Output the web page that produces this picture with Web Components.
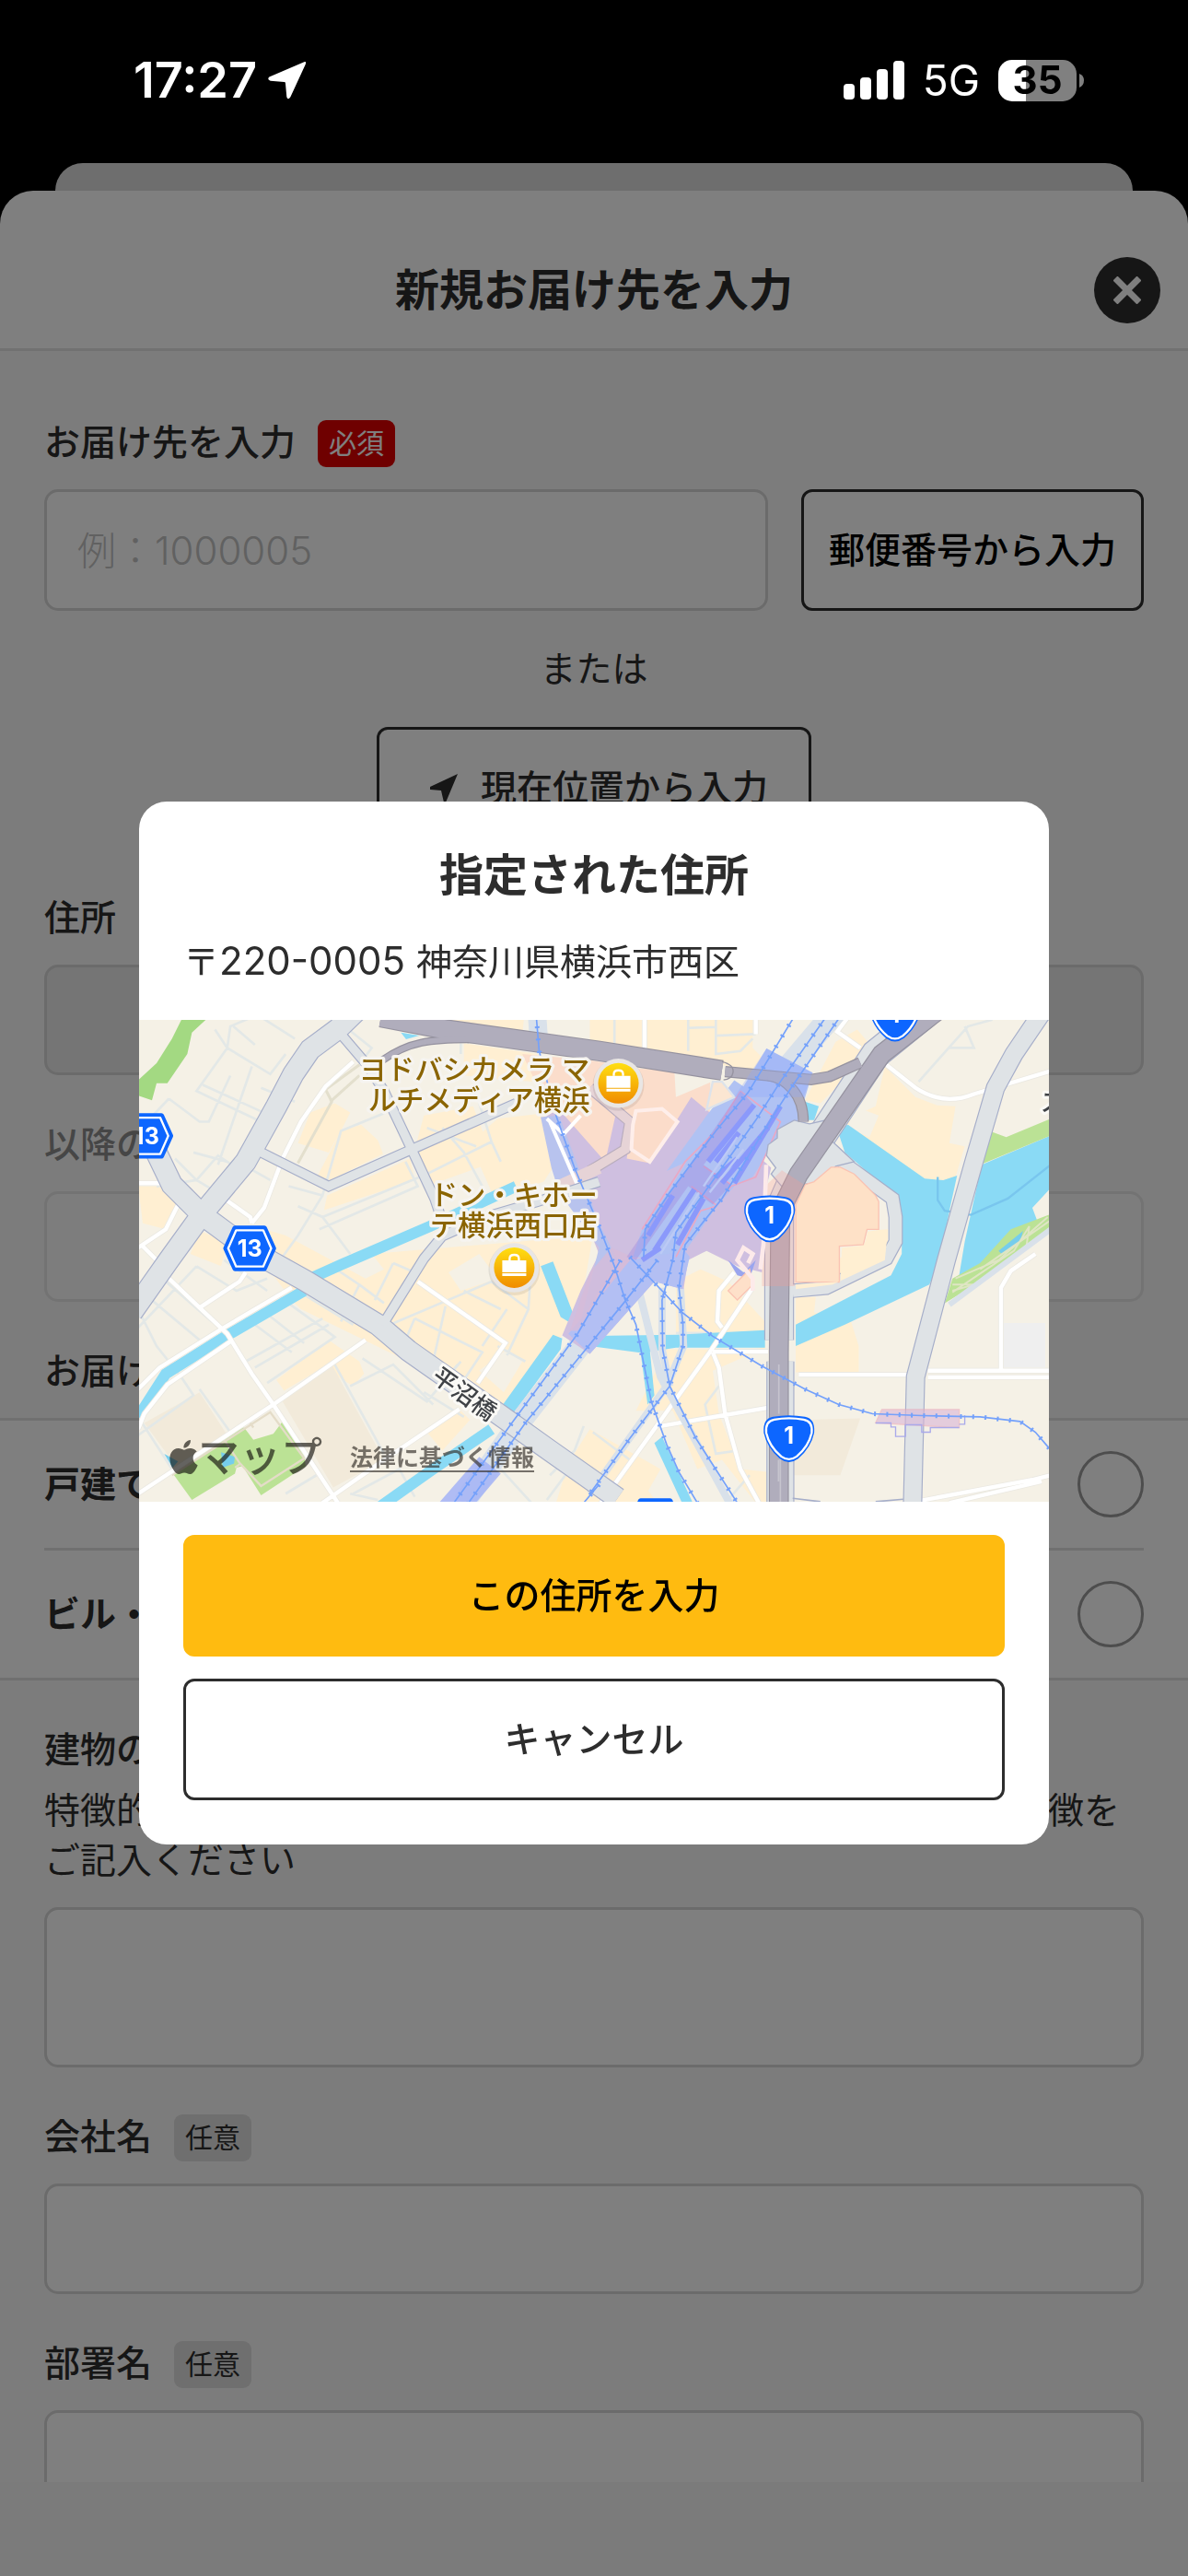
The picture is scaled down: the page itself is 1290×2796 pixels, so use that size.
<!DOCTYPE html>
<html lang="ja">
<head>
<meta charset="utf-8">
<meta name="viewport" content="width=device-width, initial-scale=1">
<title>新規お届け先を入力</title>
<style>
	body {
		margin: 0;
		background-color: #000;
		color: #2d2d2d;
		font-family: Inter, "Noto Sans CJK JP", sans-serif;
		font-size: 39px;
		line-height: 54px;
	}
</style>
</head>
<body>
<app-screen>
	<status-bar slot="status" time="17:27" network="5G" battery="35"></status-bar>
	<sheet-header slot="header">新規お届け先を入力</sheet-header>
	<form-field label="お届け先を入力" badge="必須" placeholder="例：1000005" size="large">
		<outline-button slot="after" tone="black">郵便番号から入力</outline-button>
	</form-field>
	<or-locate></or-locate>
	<form-field label="住所" state="readonly"></form-field>
	<form-field label="以降の住所" state="disabled"></form-field>
	<choice-list></choice-list>
	<form-field label="建物の特徴" kind="textarea">特徴的な外観や近くの目印など、お届けの際にわかりやすい特徴をご記入ください</form-field>
	<form-field label="会社名" badge="任意"></form-field>
	<form-field label="部署名" badge="任意"></form-field>
	<address-dialog slot="dialog" heading="指定された住所" postcode="220-0005" address="神奈川県横浜市西区">
		<area-map></area-map>
	</address-dialog>
</app-screen>

<script>
const ARROW = 'M29 1 L1 13 Q-1 15 2 16 L13 17 Q14 17 14 18 L15 29 Q16 32 18 29 L30 3 Q31 0 29 1 Z';

class AppScreen extends HTMLElement {
	constructor() {
		super();
		this.attachShadow({mode: 'open'}).innerHTML = `
	<style>
	:host {
		display: flex;
		flex-direction: column;
		height: 100vh;
		overflow: hidden;
	}

	.behind {
		flex: none;
		height: 30px;
		margin: 0 60px;
		border-radius: 30px 30px 0 0;
		background-color: #dcdcdc;
	}

	.sheet {
		flex: 1;
		min-height: 0;
		display: flex;
		flex-direction: column;
		border-radius: 36px 36px 0 0;
		overflow: hidden;
		background-color: #fff;
	}

	main {
		flex: 1;
		min-height: 0;
		overflow: hidden;
		display: flex;
		flex-direction: column;
		gap: 51px;
		padding-top: 75px;
		box-sizing: border-box;
		background-color: #f8f8f8;
	}

	footer {
		flex: none;
		height: 102px;
		background-color: #f6f6f6;
	}

	.scrim {
		position: fixed;
		inset: 0;
		display: flex;
		align-items: center;
		padding: 75px 151px 0;
		background-color: rgba(0, 0, 0, .5);
	}
	</style>
	<slot name="status"></slot>
	<div class="behind"></div>
	<div class="sheet">
		<slot name="header"></slot>
		<main><slot></slot></main>
		<footer></footer>
	</div>
	<div class="scrim"><slot name="dialog"></slot></div>
	`;
	}
}

class StatusBar extends HTMLElement {
	connectedCallback() {
		this.attachShadow({mode: 'open'}).innerHTML = `
	<style>
	:host {
		flex: none;
		display: flex;
		justify-content: space-between;
		align-items: center;
		height: 177px;
		padding: 0 113px 3px 145px;
		box-sizing: border-box;
		color: #fff;
		position: relative;
		z-index: 1;
	}

	div {
		display: flex;
		align-items: center;
	}

	.time {
		font-size: 54px;
		font-weight: 600;
		gap: 12px;
	}

	.net {
		font-size: 46px;
		gap: 20px;
	}

	.battery {
		width: 85px;
		height: 45px;
		justify-content: center;
		border-radius: 15px;
		font-size: 42px;
		font-weight: 700;
		color: #000;
		background: linear-gradient(90deg, #fff 30px, #808080 30px);
	}

	.cell {
		gap: 3px;
	}

	svg {
		display: block;
	}
	</style>
	<div class="time">${this.getAttribute('time')}<svg width="42" height="42" viewBox="0 0 31 31" fill="#fff"><path d="${ARROW}"/></svg></div>
	<div class="net">
		<svg width="66" height="42" fill="#fff">
			<rect x="0" y="25" width="12" height="17" rx="4"/>
			<rect x="18" y="18" width="12" height="24" rx="4"/>
			<rect x="36" y="9" width="12" height="33" rx="4"/>
			<rect x="54" y="0" width="12" height="42" rx="4"/>
		</svg>
		<span>${this.getAttribute('network')}</span>
		<div class="cell">
			<div class="battery">${this.getAttribute('battery')}</div>
			<svg width="5" height="15" fill="#808080"><path d="M0 0 Q5 2 5 7 Q5 13 0 15 Z"/></svg>
		</div>
	</div>
	`;
	}
}

class SheetHeader extends HTMLElement {
	constructor() {
		super();
		this.attachShadow({mode: 'open'}).innerHTML = `
	<style>
	:host {
		flex: none;
		display: grid;
		grid-template-columns: 72px 1fr 72px;
		align-items: center;
		height: 174px;
		padding: 45px 30px 0;
		box-sizing: border-box;
		border-bottom: 3px solid #e2e2e2;
	}

	h1 {
		grid-column: 2;
		margin: 0;
		text-align: center;
		font-size: 48px;
		font-weight: 700;
	}

	button {
		width: 72px;
		height: 72px;
		padding: 0;
		border: 0;
		border-radius: 50%;
		background-color: #2d2d2d;
	}

	svg {
		display: block;
		margin: auto;
	}
	</style>
	<h1><slot></slot></h1>
	<button aria-label="閉じる"><svg width="30" height="30" stroke="#fff" stroke-width="7"><path d="M2 2 L28 28 M28 2 L2 28"/></svg></button>
	`;
	}
}

class FormField extends HTMLElement {
	connectedCallback() {
		const badge = this.getAttribute('badge');
		const area = this.getAttribute('kind') === 'textarea';
		const off = this.hasAttribute('state') ? 'disabled' : '';
		this.attachShadow({mode: 'open'}).innerHTML = `
	<style>
	:host {
		display: block;
		padding: 0 48px;
	}

	.head {
		display: flex;
		align-items: flex-start;
		gap: 24px;
		height: 51px;
		margin-bottom: 24px;
	}

	label {
		font-weight: 500;
		line-height: 48px;
	}

	.badge {
		padding: 0 12px;
		border-radius: 9px;
		font-size: 30px;
		line-height: 51px;
		background-color: #dedede;
	}

	.badge.must {
		color: #fff;
		background-color: #df0000;
	}

	p {
		margin: -12px 0 24px;
	}

	.row {
		display: flex;
		gap: 36px;
	}

	input, textarea {
		flex: 1;
		min-width: 0;
		height: 120px;
		padding: 0 33px;
		box-sizing: border-box;
		border: 3px solid #d6d6d6;
		border-radius: 15px;
		background-color: #fff;
		color: inherit;
		font: inherit;
		font-size: 42px;
		resize: none;
	}

	textarea {
		height: 174px;
	}

	::placeholder {
		color: #c2c2c2;
		font-weight: 300;
		opacity: 1;
	}

	:host([size=large]) input {
		height: 132px;
	}

	:host([state=readonly]) input {
		background-color: #eaeaea;
	}

	:host([state=disabled]) label {
		color: #8c8c8c;
	}

	:host([state=disabled]) input {
		border-color: #e6e6e6;
		background-color: #fbfbfb;
	}
	</style>
	<div class="head">
		<label for="field">${this.getAttribute('label')}</label>
		${badge ? `<span class="badge ${badge === '必須' ? 'must' : ''}">${badge}</span>` : ''}
	</div>
	${area ? '<p><slot></slot></p>' : ''}
	<div class="row">
		${area ? '<textarea id="field"></textarea>' : `<input id="field" type="text" placeholder="${this.getAttribute('placeholder') || ''}" ${off}>`}
		<slot name="after"></slot>
	</div>
	`;
	}
}

class OutlineButton extends HTMLElement {
	constructor() {
		super();
		this.attachShadow({mode: 'open'}).innerHTML = `
	<style>
	:host {
		display: block;
	}

	button {
		display: flex;
		align-items: center;
		justify-content: center;
		gap: 24px;
		width: 100%;
		height: 132px;
		padding: 0 27px;
		box-sizing: border-box;
		border: 3px solid #2d2d2d;
		border-radius: 12px;
		background-color: #fff;
		color: #2d2d2d;
		font: inherit;
		font-weight: 500;
		white-space: nowrap;
	}

	:host([tone=black]) button {
		color: #000;
	}

	:host([tone=yellow]) button {
		border-color: #ffbb10;
		background-color: #ffbb10;
		color: #000;
	}

	:host([wide]) button {
		padding: 0 44px 0 55px;
	}
	</style>
	<button type="button"><slot name="icon"></slot><span><slot></slot></span></button>
	`;
	}
}

class OrLocate extends HTMLElement {
	constructor() {
		super();
		this.attachShadow({mode: 'open'}).innerHTML = `
	<style>
	:host {
		display: flex;
		flex-direction: column;
		align-items: center;
		gap: 36px;
		margin-top: -15px;
	}

	svg {
		display: block;
	}
	</style>
	<span>または</span>
	<outline-button wide>
		<svg slot="icon" width="31" height="31" viewBox="0 0 31 31" fill="#2d2d2d"><path d="M30 0 L0 14 L0 17 L12 18 L15 31 L17 31 Z"/></svg>
		現在位置から入力
	</outline-button>
	`;
	}
}

class ChoiceList extends HTMLElement {
	constructor() {
		super();
		this.attachShadow({mode: 'open'}).innerHTML = `
	<style>
	:host {
		display: block;
	}

	h2 {
		height: 51px;
		margin: 0 48px 24px;
		font-size: 39px;
		line-height: 48px;
		font-weight: 500;
	}

	.rows {
		padding: 0 48px;
		border: solid #e0e0e0;
		border-width: 3px 0;
		background-color: #fff;
	}

	label {
		display: flex;
		align-items: center;
		justify-content: space-between;
		height: 138px;
		font-weight: 700;
	}

	label + label {
		border-top: 3px solid #e0e0e0;
	}

	input {
		appearance: none;
		width: 72px;
		height: 72px;
		margin: 0;
		border: 3px solid #9a9a9a;
		border-radius: 50%;
	}
	</style>
	<h2>お届け先の建物</h2>
	<div class="rows">
		<label>戸建て<input type="radio" name="building"></label>
		<label>ビル・マンション<input type="radio" name="building"></label>
	</div>
	`;
	}
}

class AddressDialog extends HTMLElement {
	connectedCallback() {
		this.attachShadow({mode: 'open'}).innerHTML = `
	<style>
	:host {
		flex: 1;
		min-width: 0;
		border-radius: 30px;
		overflow: hidden;
		background-color: #fff;
	}

	header {
		display: flex;
		flex-direction: column;
		gap: 30px;
		padding: 44px 48px 36px;
	}

	h2 {
		margin: 0;
		text-align: center;
		font-size: 48px;
		line-height: 72px;
	}

	p {
		margin: 0;
	}

	.postcode {
		font-size: 42px;
	}

	.actions {
		display: flex;
		flex-direction: column;
		gap: 24px;
		padding: 36px 48px 48px;
	}
	</style>
	<header>
		<h2>${this.getAttribute('heading')}</h2>
		<p>〒<span class="postcode">${this.getAttribute('postcode')} </span>${this.getAttribute('address')}</p>
	</header>
	<slot></slot>
	<div class="actions">
		<outline-button tone="yellow">この住所を入力</outline-button>
		<outline-button>キャンセル</outline-button>
	</div>
	`;
	}
}

// [path, width], drawn first as a casing and then as a fill
const majorRoads = [
	['M720 -20 L650 48 L560 115 L505 195 L450 300 L350 480 L207 652 L100 800 L-20 970', 66],
	['M40 410 L110 555 L207 652 L360 765 L540 865 L780 1010 L880 1095 L1200 1320 L1340 1420 L1560 1575', 66],
	['M660 65 L745 165 L800 250 L890 440 L965 600 L985 660', 28],
	['M395 447 L620 560 L890 440 L1230 290', 28],
	['M1500 545 L1300 610 L1130 660 L990 722 L930 795 L795 1012', 28],
	['M2945 -10 L2850 130 L2790 240 L2720 480 L2630 800 L2530 1180 L2520 1600', 56],
	['M2290 480 L2455 600 L2465 660 L2465 740 L2435 795 L2240 890 L2130 900', 40],
	['M2560 0 L2400 130 L2130 540 L2086 640 L2086 1060', 90],
	['M2090 1130 L2090 1600', 84]
];

const highways = [
	['M790 10 L1000 50 L1500 120 L1900 183', 60],
	['M1910 187 L2190 213 L2250 203 L2350 158', 30],
	['M2050 200 C2110 210 2165 260 2165 350', 28],
	['M1100 82 C950 80 880 90 795 150', 18],
	['M2600 -10 L2420 130 L2150 520 L2090 640 L2085 1100 L2085 1600', 58]
];

const whiteRoads = `
	M0 1220 L70 1150 L270 1025 L500 890
	M0 1350 L20 1300 L95 1205 L300 1065
	M100 860 L200 955 L290 1040 L370 1170 L440 1270 L650 1590
	M200 955 L330 870 L350 840
	M0 1560 L440 1270 L740 1060
	M600 1590 L830 1430 L1045 1285
	M910 870 L1195 1070 L1105 1200
	M700 155 L610 235 L530 350 L470 470 L410 630 L370 680
	M0 550 L80 550 M0 760 L90 700 L130 620 M10 750 L70 810
	M280 600 L365 660 L370 680
	M1940 840 L1890 900 L1885 1000 L1900 1020
	M2000 890 L1900 1040 L1860 1100 L1550 1530 L1470 1640
	M1870 1098 L2050 1098
	M1870 1100 L1890 1150 L1910 1300 L1960 1480 L2020 1590
	M1700 1340 L2050 1280
	M2150 1173 L2515 1173 M2570 1160 L2970 1160 M2570 1181 L2970 1181
	M2808 1160 L2808 890 L2840 835 L2920 780
	M2550 1582 L2910 1515 L2970 1500 M2640 1590 L2940 1520
	M2010 18 L2010 65 M1648 18 L1648 130
	M2350 110 L2275 57 L2310 10
	M2435 165 L2530 240 Q2620 300 2720 260 L2970 185`;

const minorRoads = `
	M250 50 L290 110 L430 195 L480 130 M290 110 L190 250 L400 350 M290 110 L300 40 L370 10
	M370 170 L260 490 M210 230 L430 330 M100 275 L200 350 L230 350 L300 200 M100 275 L0 380
	M120 470 L190 540 L260 460 L350 520 M310 40 L380 100 M400 10 L510 80 M190 540 L60 560
	M350 495 L430 540 M190 540 L290 600 M180 450 L290 480 M510 285 L400 240
	M490 560 L600 590 L660 380 L830 310 M600 590 L520 720 L470 790 M520 625 L600 660 L690 780
	M600 660 L940 520 L1150 415 L1110 290 M990 370 L1060 450 L1120 560 M940 370 L1100 430
	M660 30 L760 110 L730 150 M870 480 L910 560 L590 700 M1050 95 L1050 130 M1150 415 L1180 480
	M20 910 L200 1060 M90 870 L240 1000 M190 820 L320 900 L420 860 M280 800 L420 900 M0 1020 L190 820
	M0 960 L60 1080 L140 1180 M140 1180 L180 1240 L0 1370 M200 1220 L300 1360 M0 1310 L110 1480
	M460 920 L600 1020 L640 1050 L420 1200 M520 900 L700 1010 M340 980 L500 1100 M350 1130 L600 990
	M300 1040 L540 910 M400 960 L540 1070 M380 1150 L620 1010 M630 820 L720 880 L660 1000
	M720 880 L800 940 M640 1140 L800 1430 M690 1210 L830 1140 L960 1270 M730 1120 L940 1260 L1050 1130
	M830 810 L770 930 M830 810 L900 840 M820 1010 L1150 870 L1270 960 L1200 1110 M900 990 L870 1060
	M900 990 L1120 1100 L1060 1190 M1000 950 L960 1130 M1040 1140 L980 1210 M1270 960 L1275 880 L1180 830
	M1200 960 L1120 1080 M1170 1080 L1260 1130 M930 1230 L1060 1310 M1060 900 L1180 960
	M700 1560 L850 1480 L900 1570 M1180 1480 L1280 1590 M1260 1340 L1500 1500 M1340 1500 L1420 1420 L1450 1340
	M1330 1580 L1420 1460 L1490 1510 M480 1560 L580 1500 M690 1560 L780 1580
	M1550 18 L1550 100 M1790 18 L1790 120 M1880 18 L1880 130 L1960 120 L2000 80 M1790 45 L1880 42 M1880 70 L2010 65
	M2540 220 L2700 40 L2780 18 M2640 110 L2720 110 L2690 40
	M1480 1360 L1600 1450 M1890 1210 L1845 1270 L1880 1430 L1950 1420 M1750 1037 L1860 1037 M1990 1500 L1920 1580`;

const rails = `
	M2140 0 L1985 255 L1880 380 L1730 580 L1650 700 L1645 790
	M2245 0 L2090 220 L2010 345 L1900 500 L1750 710 L1740 800
	M2290 0 L2125 240 L2080 310 L1900 600 L1780 750 L1760 890 L1773 1010 L1773 1080 L1730 1210 L1600 1380 L1470 1560
	M1740 800 L1705 930 L1707 1090 L1730 1210 L1815 1380 L1950 1590
	M1295 0 L1305 120 L1360 330 L1420 500 L1500 690 L1550 820 L1585 930 L1620 1010 L1640 1110 L1670 1260 L1720 1400 L1760 1490 L1820 1590
	M1690 800 L1580 940 L1420 1135 L1260 1330 L1075 1590
	M1570 800 L1430 1040 L1220 1325 L1020 1600
	M1600 790 L1705 900 L1770 970 L1870 1048 L2030 1145 L2170 1220 L2280 1270 L2390 1300 L2550 1306 L2740 1310 L2870 1325 L2920 1360 L2980 1430
	M1500 1530 L1450 1590`;

const casedRoads = (list, casing, fill) =>
	`<g fill="none" stroke="${casing}">${list.map(r => `<path d="${r[0]}" stroke-width="${r[1] + 7}"/>`).join('')}</g>
	<g fill="none" stroke="${fill}">${list.map(r => `<path d="${r[0]}" stroke-width="${r[1]}"/>`).join('')}</g>`;

const hexShield = (x, y) => `
	<g transform="translate(${x} ${y})" stroke-linejoin="round">
		<path d="M-48 -66 H48 L78 0 L48 66 H-48 L-78 0 Z" fill="#0d66ff" stroke="#0d66ff" stroke-width="16"/>
		<path d="M-44 -59 H44 L70 0 L44 59 H-44 L-70 0 Z" fill="none" stroke="#fff" stroke-width="7"/>
		${y < 1600 ? '<text y="26" text-anchor="middle" class="num">13</text>' : ''}
	</g>`;

const routeShield = (x, y) => `
	<g transform="translate(${x} ${y})" stroke-linejoin="round">
		<path d="M-52 -70 Q0 -80 52 -70 Q86 -64 82 -18 Q72 30 30 66 Q0 88 -30 66 Q-72 30 -82 -18 Q-86 -64 -52 -70 Z" fill="#0d66ff"/>
		<path d="M-48 -61 Q0 -70 48 -61 Q78 -56 74 -18 Q64 26 25 59 Q0 77 -25 59 Q-64 26 -74 -18 Q-78 -56 -48 -61 Z" fill="none" stroke="#fff" stroke-width="7"/>
		<text y="16" text-anchor="middle" class="num">1</text>
	</g>`;

const shopPin = (x, y) => `
	<g transform="translate(${x} ${y})">
		<circle cy="6" r="84" fill="#000" opacity=".08"/>
		<circle r="80" fill="#e9e6e4"/>
		<circle r="66" fill="url(#pin)"/>
		<path d="M-39 -24 H39 V15 H-39 Z M-39 18 H39 V27 H-39 Z" fill="#fff"/>
		<path d="M-15 -24 V-30 Q-15 -42 0 -42 Q15 -42 15 -30 V-24" fill="none" stroke="#fff" stroke-width="7"/>
	</g>`;

class AreaMap extends HTMLElement {
	constructor() {
		super();
		this.attachShadow({mode: 'open'}).innerHTML = `
	<style>
	:host {
		display: block;
		position: relative;
		height: 523px;
		overflow: hidden;
	}

	.map {
		display: block;
		width: 100%;
		height: 100%;
	}

	text {
		font-family: Inter, "Noto Sans CJK JP", sans-serif;
	}

	.num {
		font-size: 75px;
		font-weight: 700;
		fill: #fff;
	}

	.poi {
		font-size: 91px;
		font-weight: 500;
		fill: #8a6400;
		stroke: #f6f4f0;
		stroke-width: 20px;
		stroke-linejoin: round;
		paint-order: stroke;
	}

	.street {
		font-size: 78px;
		font-weight: 500;
		fill: #3f4246;
		stroke: #fbfaf6;
		stroke-width: 18px;
		stroke-linejoin: round;
		paint-order: stroke;
	}

	.credit {
		position: absolute;
		left: 33px;
		bottom: 24px;
		display: flex;
		align-items: center;
		color: rgba(20, 18, 14, .66);
		font-size: 45px;
		font-weight: 500;
		line-height: 48px;
	}

	.credit a {
		margin-left: 30px;
		color: rgba(50, 46, 40, .66);
		font-size: 25px;
		font-weight: 700;
		text-underline-offset: 5px;
	}
	</style>
	<svg class="map" viewBox="3 18 2961 1569" preserveAspectRatio="xMidYMid slice" role="img" aria-label="横浜駅周辺の地図">
		<defs>
			<linearGradient id="pin" x2="0" y2="1"><stop stop-color="#ffdf12"/><stop offset="1" stop-color="#f08c00"/></linearGradient>
		</defs>
		<rect width="2970" height="1600" fill="#f5f1e6"/>
		<g fill="#ffefd2">
			<path d="M870 18 H1255 L1250 75 Z M1060 95 L1300 130 L1290 220 L1060 200 Z"/>
			<path d="M560 320 L640 290 L690 320 L660 380 L620 450 L520 420 Z M660 380 L725 360 L780 410 L797 455 L625 540 L582 530 Z"/>
			<path d="M615 590 L885 470 L900 540 L605 638 Z M930 330 L1090 300 L1160 480 L940 560 L900 440 Z"/>
			<path d="M1170 340 L1340 320 L1362 480 L1320 545 L1160 600 L1080 420 Z"/>
			<path d="M0 560 L120 560 L130 620 L90 700 L15 680 Z M200 705 L290 740 L270 820 L170 780 Z"/>
			<path d="M380 690 L480 720 L740 860 L800 830 L760 780 L1480 720 L1440 950 L1330 1120 L1180 1310 L940 1160 L530 960 L500 930 L440 850 Z"/>
			<path d="M450 1190 L620 1060 L720 1130 L735 1170 L700 1210 L600 1150 L475 1225 Z M940 1360 L1050 1290 L1080 1320 L990 1420 Z"/>
			<path d="M1470 18 H2000 V110 L2080 190 L1470 110 Z M2270 90 L2340 50 L2400 120 L2320 190 L2220 290 L2170 280 Z"/>
			<path d="M2430 170 L2530 270 L2600 297 L2660 300 L2640 420 L2690 430 L2660 530 L2620 540 L2560 535 L2410 450 L2290 350 L2400 300 Z"/>
			<path d="M1750 870 L1830 830 L1920 870 L2040 1000 V1090 L1750 1040 Z M1720 1090 L2030 1090 L1870 1160 L1890 1300 L1960 1480 L2060 1490 V1590 H2010 L1900 1450 L1820 1480 L1740 1290 L1620 1290 Z"/>
			<path d="M2140 920 L2205 920 L2200 970 L2320 1000 L2345 1080 V1165 L2140 1165 Z M2140 880 L2440 700 L2440 790 L2230 880 Z"/>
			<path d="M1470 1350 L1700 1480 L1660 1550 L1690 1590 L1360 1590 L1400 1460 Z"/>
		</g>
		<g fill="#f5f1e6">
			<path d="M1010 840 L1110 780 L1170 860 L1050 900 Z M2330 300 L2410 330 L2380 400 L2310 370 Z M1110 1160 L1200 1090 L1250 1130 L1190 1230 Z"/>
		</g>
		<path d="M20 1330 L200 1230 L290 1370 L130 1480 Z M470 1260 L630 1140 L800 1450 L635 1540 Z M2140 1320 L2350 1315 L2285 1500 L2130 1500 Z" fill="#f2eada"/>
		<path d="M2815 1005 H2952 V1150 H2815 Z" fill="#efefef"/>
		<path d="${minorRoads}" fill="none" stroke="#e3e8e7" stroke-width="8"/>
		<g fill="#8adaf5">
			<path d="M2275 375 L2310 360 L2560 535 L2620 540 L2665 525 L2640 640 L2610 800 L2575 880 L2300 1010 L2140 1080 V1010 L2450 850 L2485 780 V660 L2450 580 L2300 450 Z"/>
			<path d="M2745 490 L2970 395 V565 L2910 630 L2925 670 L2790 790 L2670 860 L2690 740 Z"/>
			<path d="M1480 1047 L1750 1043 L2040 1028 V1085 L1750 1085 L1640 1102 L1470 1080 Z M1635 1100 L1665 1090 L1680 1240 L1658 1270 Z M1680 1395 L1705 1375 L1805 1590 H1770 Z"/>
			<path d="M855 60 L915 70 L872 82 Z M2170 285 L2215 300 L2200 345 L2180 345 Z M1310 820 L1350 805 L1420 985 L1400 1000 L1375 985 Z M1350 1043 L1380 1055 L1375 1090 L1220 1300 L1180 1280 Z"/>
		</g>
		<path d="M560 860 L660 815 L950 690 L1230 560 M540 900 L290 1045 L90 1170 L0 1310 M1150 1350 L960 1480 L790 1600" fill="none" stroke="#8adaf5" stroke-width="36"/>
		<path d="M2602 530 V605 L2625 640 L2710 653 L2830 600 L2970 490" fill="none" stroke="#79c6ee" stroke-width="7"/>
		<path d="M150 0 L240 0 L175 60 L160 130 L95 225 H60 L45 280 L0 265 V215 L60 160 L110 80 Z" fill="#a3d982"/>
		<g fill="#bbe295">
			<path d="M2770 380 L2825 400 L2970 340 V395 L2740 490 Z M2740 810 L2840 700 L2970 650 V690 L2820 820 L2625 940 L2650 860 Z"/>
			<path d="M110 1490 L320 1345 H345 L375 1385 L440 1365 L470 1325 L495 1345 L540 1430 L545 1470 L400 1565 L340 1470 L320 1475 L315 1495 L175 1580 Z"/>
		</g>
		<path d="M2800 770 L2880 705 L2870 740 L2810 780 Z M270 1425 L315 1440 L312 1462 L275 1475 Z M85 1430 L130 1455 L112 1475 Z" fill="#76cdec"/>
		<path d="M2740 830 L2970 670 M2650 905 L2850 770 L2900 690 L2890 760 M2660 860 L2800 800 L2960 660 M2650 880 L2720 880 L2650 900" fill="none" stroke="#dfe5c4" stroke-width="6"/>
		<path d="M2640 945 L2970 700" stroke="#d9e1ea" stroke-width="18"/>
		<path d="M110 1500 L430 1295 L540 1445 L400 1535 L330 1460 L280 1385 M365 1330 L375 1345 M315 1475 L330 1465" fill="none" stroke="#e4dcc8" stroke-width="7"/>
		<path d="M720 165 L610 245 L630 285 L520 485 M720 200 L625 285" fill="none" stroke="#e3dfcd" stroke-width="9"/>
		<path d="${whiteRoads}" fill="none" stroke="#ebe9e2" stroke-width="18"/>
		<path d="${whiteRoads}" fill="none" stroke="#fff" stroke-width="13"/>
		<g fill="none" stroke="#d9e1ea">
			<path d="M1460 1050 L1240 1330 L1060 1590" stroke-width="72"/>
			<path d="M2270 -10 L2110 180" stroke-width="76"/>
			<path d="M1630 900 L1700 1180 L1930 1600 M1705 890 V1090 L1730 1210 M1765 890 L1775 1080 L1720 1210 L1470 1560" stroke-width="24"/>
			<path d="M1298 0 L1305 100" stroke-width="60"/>
		</g>

		<g>
			<path d="M1250 130 L1470 150 L1640 178 L1745 182 L1750 270 L1862 222 L1860 330 L1680 600 L1470 620 L1350 340 Z" fill="#fbddcb"/>
			<path d="M1320 335 L1370 310 L1520 480 L1560 300 L1600 400 L1590 470 L1665 485 L1800 270 L1860 320 L2060 500 L2030 620 L2030 840 L1950 820 L1850 770 L1790 800 L1775 895 L1680 870 L1470 1105 L1380 1045 L1440 900 L1500 780 Z" fill="#cfbfe0"/>
			<path d="M1310 335 L1370 330 L1500 680 L1560 800 L1440 1000 L1500 760 L1370 580 L1345 500 Z" fill="#b8c3ee"/>
			<path d="M2045 112 L2195 190 L2140 370 L2080 400 L2000 530 L1940 560 L1880 630 L1760 800 L1610 790 L1640 700 L1730 570 L1785 480 L1720 510 L1850 330 L1940 215 L1970 235 Z" fill="#b0c2f3"/>
			<path d="M1600 800 L1520 900 L1400 1040 L1470 1105 L1680 870 L1770 895 L1795 790 L1780 770 Z" fill="#b3bff3"/>
			<path d="M1470 840 L1540 760 L1610 790 L1500 920 L1430 1030 L1405 1030 Z" fill="#d6bbd8" opacity=".8"/>
			<path d="M1470 240 L1600 350 L1585 440 L1470 510" fill="none" stroke="#b9adbd" stroke-width="36"/>
			<path d="M1470 240 L1600 350 L1585 440 L1470 510" fill="none" stroke="#e6d3d6" stroke-width="29"/>
			<path d="M1370 560 L1500 500" stroke="#e6d3d6" stroke-width="40"/>
			<path d="M1610 360 L1620 315 L1705 308 L1755 350 L1665 480 L1605 440 Z" fill="#fbdcca" stroke="#feeeea" stroke-width="12"/>
			<path d="M1330 340 L1385 390 L1440 330 M1340 350 L1440 580" fill="none" stroke="#fff" stroke-width="12"/>
			<path d="M1850 310 L1940 270 L1900 220 L1870 220 Z" fill="#fbe6d2" stroke="#dde3ea" stroke-width="7"/>
			<path d="M1960 250 L2090 350 L2010 530 L1930 560 L1880 625 L1830 640 L1750 790 M1960 250 L1880 380 L1780 480 L1640 700 M1800 560 L1880 620 M1840 495 L1930 555" fill="none" stroke="#e9a8c4" stroke-width="5"/>
			<path d="M1960 250 L2000 290 L1840 490 L1930 555 L1870 620 L1790 560 L1620 800 L1590 790 L1740 570 Z" fill="#a58fe0" opacity=".45"/>
			<g fill="none" stroke="#8b99fb" stroke-width="17">
				<path d="M2005 295 L1855 480 M1955 385 L1880 480 M1880 530 L1950 470 M1900 550 L2050 370 M2090 300 L1940 550 M1740 590 L1660 720 M1810 570 L1680 770 M1840 600 L1755 750 M1700 760 L1640 800"/>
			</g>
			<path d="M1950 400 L1840 560 M1970 440 L1860 580 M1825 580 L1700 780" fill="none" stroke="#bccaf5" stroke-width="7"/>
			<path d="M1920 800 L1970 840 L2010 800 L1990 860 L1950 850 Z" fill="#9aa5ee"/>
		</g>

		${casedRoads(majorRoads, '#a6aec9', '#dfe3e6')}
		<path d="M2135 345 L2185 357 L2260 340 L2260 415 L2330 480 L2270 495 L2240 525 L2210 550 L2170 553 L2120 590 L2060 520 L2075 500 L2045 460 L2050 425 L2080 403 L2080 375 Z" fill="#dfe3e6" stroke="#a6aec9" stroke-width="4"/>
		<path d="M2200 545 L2255 498 H2285 L2330 520 L2370 560 L2400 590 L2410 610 V700 H2372 L2360 750 L2282 755 V872 H2140 V620 L2170 555 Z" fill="#fee1c7" stroke="#fac3b3" stroke-width="4"/>
		<path d="M2290 760 L2285 870 L2140 880 V895 L2260 880 L2430 800 L2440 700 L2412 702 L2374 707 L2362 752 Z" fill="#ffefd2"/>
		<path d="M1920 900 L1990 830 L2000 880 L1950 930 Z" fill="#fee0c9" stroke="#fac3b3" stroke-width="4"/>
		${casedRoads(highways, '#95929f', '#b0adbc')}
		<path d="M1900 155 Q1940 165 1936 190 Q1932 212 1905 214" fill="none" stroke="#95929f" stroke-width="4"/>
		<path d="M2040 560 L2095 508 L2165 553 L2137 620 V885 H2030 V620 Z" fill="#ff9c90" opacity=".26"/>
		<path d="M2044 490 L2035 750 L2025 830 M2000 900 V860 L1950 800 L1970 760 L2000 780 L1985 810" fill="none" stroke="#fdeaea" stroke-width="14"/>
		<path d="M2045 112 L2195 190 L2165 270 L1940 270 Z" fill="#8fa8fb" opacity=".32"/>
		<path d="M2085 1140 V1300 M2084 1450 V1520 M2090 1440 V1590" stroke="#c6c4ce" stroke-width="5"/>
		<path d="M2130 1575 L2220 1586 M2400 1586 L2490 1578" stroke="#a6aec9" stroke-width="5"/>
		<path d="M1110 1440 L1180 1495 L1090 1600 H970 Z" fill="#a3b3f6" opacity=".85"/>
		<path d="M2420 1286 H2672 V1345 L2400 1330 Z" fill="#d9b4d6" stroke="#eaa8b8" stroke-width="4" opacity=".6"/>
		<path d="M2400 1330 H2450 V1343 H2465 V1374 H2497 V1336 H2550 V1360 H2578 V1345 H2672 M2672 1334 H2690 V1305" fill="none" stroke="#a9a9ea" stroke-width="4"/>
		<g fill="none" stroke="#74a1fb">
			<path d="${rails}" stroke-width="5"/>
			<path d="${rails}" stroke-width="15" stroke-dasharray="6 34"/>
		</g>

		${hexShield(28, 396)}
		${hexShield(363, 762)}
		${hexShield(1683, 1649)}
		${routeShield(2055, 665)}
		${routeShield(2118, 1380)}
		${routeShield(2463, 12)}
		<text class="poi" x="1470" y="215" text-anchor="end">ヨドバシカメラ マ</text>
		<text class="poi" x="1470" y="312" text-anchor="end">ルチメディア横浜</text>
		<text class="poi" x="1495" y="622" text-anchor="end">ドン・キホー</text>
		<text class="poi" x="1495" y="720" text-anchor="end">テ横浜西口店</text>
		${shopPin(1563, 225)}
		${shopPin(1224, 825)}
		<text class="street" transform="translate(1062 1235) rotate(36)" y="28" text-anchor="middle">平沼橋</text>
		<text class="street" x="2936" y="316">ス</text>
	</svg>
	<div class="credit">
		<svg width="31" height="37" viewBox="2 0 20 24" preserveAspectRatio="none" fill="currentColor" aria-hidden="true"><path d="M12.152 6.896c-.948 0-2.415-1.078-3.96-1.04-2.04.027-3.91 1.183-4.961 3.014-2.117 3.675-.546 9.103 1.519 12.09 1.013 1.454 2.208 3.09 3.792 3.039 1.52-.065 2.09-.987 3.935-.987 1.831 0 2.35.987 3.96.948 1.637-.026 2.676-1.48 3.676-2.948 1.156-1.688 1.636-3.325 1.662-3.415-.039-.013-3.182-1.221-3.22-4.857-.026-3.04 2.48-4.494 2.597-4.559-1.429-2.09-3.623-2.324-4.39-2.376-2-.156-3.675 1.09-4.61 1.09zM15.53 3.83c.843-1.012 1.4-2.427 1.245-3.83-1.207.052-2.662.805-3.532 1.818-.78.896-1.454 2.338-1.273 3.714 1.338.104 2.715-.688 3.559-1.701"/></svg>
		<span>マップ</span>
		<a href="#legal">法律に基づく情報</a>
	</div>
	`;
	}
}

customElements.define('outline-button', OutlineButton);
customElements.define('app-screen', AppScreen);
customElements.define('status-bar', StatusBar);
customElements.define('sheet-header', SheetHeader);
customElements.define('form-field', FormField);
customElements.define('or-locate', OrLocate);
customElements.define('choice-list', ChoiceList);
customElements.define('area-map', AreaMap);
customElements.define('address-dialog', AddressDialog);
</script>
</body>
</html>
